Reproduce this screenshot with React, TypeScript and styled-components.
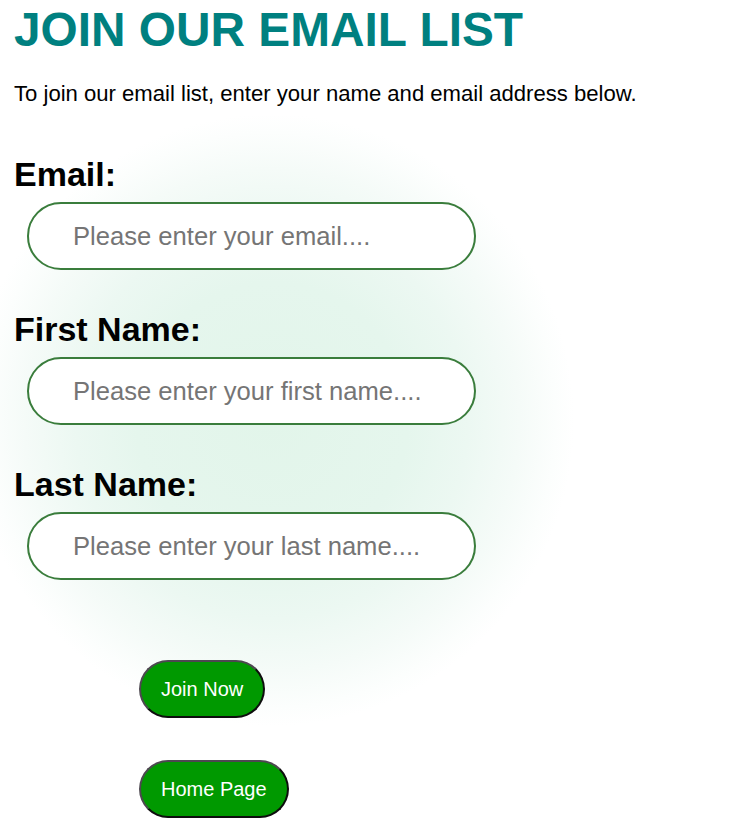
import React from "react";
import styled, { createGlobalStyle } from "styled-components";

const GlobalStyle = createGlobalStyle`
  html, body {
    margin: 0;
    padding: 0;
    background: #ffffff;
  }
  body {
    font-family: "Liberation Sans", Arial, sans-serif;
    color: #000000;
  }
`;

const Page = styled.main`
  display: flex;
  flex-direction: column;
  align-items: flex-start;
  padding-top: 2px;
  padding-bottom: 12px;
`;

const Title = styled.h1`
  margin: 0;
  padding-left: 14px;
  font-family: "Liberation Sans", Arial, sans-serif;
  font-size: 47.8px;
  line-height: 56px;
  font-weight: 700;
  color: #008080;
`;

const Intro = styled.p`
  margin: 23px 0 0;
  padding-left: 14px;
  font-size: 22.1px;
  line-height: 26px;
`;

const SignupForm = styled.form`
  display: flex;
  flex-direction: column;
  align-items: flex-start;
  box-sizing: border-box;
  width: 600px;
  height: 612px;
  margin-top: 7px;
  padding: 40px 0 0 14px;
  background: radial-gradient(
    ellipse 302px 306px at 272px 306px,
    #e2f5ea 0%,
    #e5f6ed 45%,
    #ecf8f2 65%,
    #f5fbf8 82%,
    #fcfefd 94%,
    rgba(255, 255, 255, 0) 100%
  );
`;

const Field = styled.div`
  display: flex;
  flex-direction: column;
  align-items: flex-start;
  gap: 8px;
  margin-bottom: 39px;
`;

const Label = styled.label`
  font-size: 34px;
  line-height: 40px;
  font-weight: 700;
`;

const TextInput = styled.input`
  box-sizing: border-box;
  width: 449px;
  height: 68px;
  margin-left: 13px;
  padding: 0 20px 0 44px;
  border: 2px solid #3a7d3c;
  border-radius: 34px;
  background: #ffffff;
  font-family: "Liberation Sans", Arial, sans-serif;
  font-size: 25.6px;
  color: #000000;
  outline: none;

  &::placeholder {
    color: #757575;
  }
`;

const PillButton = styled.button<{ $top: number }>`
  margin-top: ${(p) => p.$top}px;
  margin-left: 125px;
  box-sizing: border-box;
  height: 58px;
  padding: 0 20px;
  border: 2px solid;
  border-color: #4d4850 #0d0d0d #0d0d0d #4d4850;
  border-radius: 29px;
  background: #009900;
  color: #ffffff;
  font-family: "Liberation Sans", Arial, sans-serif;
  font-size: 20px;
  line-height: 24px;
  cursor: pointer;
`;

const HomeButton = styled(PillButton)`
  margin-left: 139px;
`;

export default function App() {
  return (
    <>
      <GlobalStyle />
      <Page>
        <Title>JOIN OUR EMAIL LIST</Title>
        <Intro>
          To join our email list, enter your name and email address below.
        </Intro>
        <SignupForm onSubmit={(e) => e.preventDefault()}>
          <Field>
            <Label htmlFor="email">Email:</Label>
            <TextInput
              id="email"
              type="email"
              placeholder="Please enter your email...."
            />
          </Field>
          <Field>
            <Label htmlFor="first">First Name:</Label>
            <TextInput
              id="first"
              type="text"
              placeholder="Please enter your first name...."
            />
          </Field>
          <Field>
            <Label htmlFor="last">Last Name:</Label>
            <TextInput
              id="last"
              type="text"
              placeholder="Please enter your last name...."
            />
          </Field>
          <PillButton type="submit" $top={41}>
            Join Now
          </PillButton>
        </SignupForm>
        <HomeButton type="button" $top={34}>
          Home Page
        </HomeButton>
      </Page>
    </>
  );
}
